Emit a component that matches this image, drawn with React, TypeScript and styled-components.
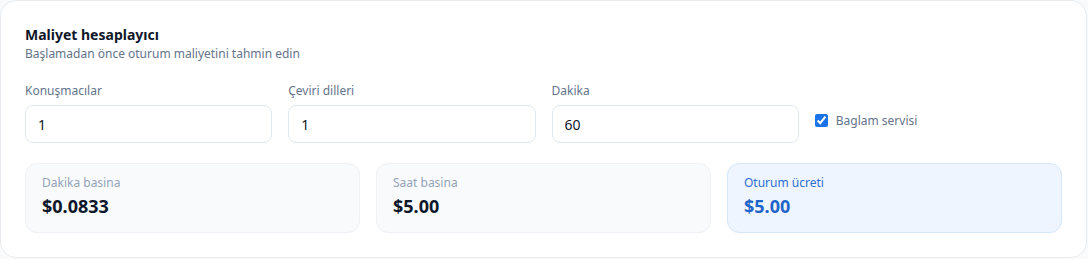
import React from "react";
import styled, { createGlobalStyle } from "styled-components";

const Global = createGlobalStyle`
  html, body { margin: 0; padding: 0; background: #f8fafc; }
  body { font-family: "Noto Sans", "Open Sans", sans-serif; color: #0f172a; }
  * { box-sizing: border-box; }
`;

const Card = styled.section`
  width: 1087px;
  height: 258px;
  background: #ffffff;
  border: 1px solid #e8ebf0;
  border-radius: 16px;
  padding: 24px 24px 24px;
  display: flex;
  flex-direction: column;
`;

const Title = styled.h2`
  margin: 0;
  font-size: 14px;
  line-height: 20px;
  font-weight: 700;
  color: #0f172a;
`;

const Subtitle = styled.p`
  margin: 1px 0 0;
  font-size: 12px;
  line-height: 16px;
  color: #64748b;
`;

const Fields = styled.div`
  margin-top: 21px;
  display: grid;
  grid-template-columns: repeat(4, 1fr);
  gap: 16px;
  align-items: end;
`;

const Field = styled.label`
  display: flex;
  flex-direction: column;
  gap: 6px;
`;

const Label = styled.span`
  font-size: 12px;
  line-height: 16px;
  color: #64748b;
`;

const Input = styled.input`
  height: 38px;
  border: 1px solid #e2e8f0;
  border-radius: 8px;
  padding: 0 12px;
  font-family: inherit;
  font-size: 14px;
  color: #0f172a;
  background: #fff;
  outline: none;
`;

const CheckRow = styled.label`
  display: flex;
  align-items: center;
  gap: 8px;
  height: 38px;
  padding-bottom: 8px;
  font-size: 12px;
  color: #64748b;
`;

const Check = styled.input`
  margin: 0;
  width: 13px;
  height: 13px;
  accent-color: #1a73e8;
`;

const Stats = styled.div`
  margin-top: 20px;
  display: grid;
  grid-template-columns: repeat(3, 1fr);
  gap: 16px;
`;

const Stat = styled.div<{ $accent?: boolean }>`
  height: 70px;
  border-radius: 12px;
  border: 1px solid ${(p) => (p.$accent ? "#d6e6fd" : "#eef1f5")};
  background: ${(p) => (p.$accent ? "#eef5ff" : "#f8fafc")};
  padding: 11px 16px;
  display: flex;
  flex-direction: column;
  gap: 3px;
`;

const StatLabel = styled.span<{ $accent?: boolean }>`
  font-size: 12px;
  line-height: 16px;
  color: ${(p) => (p.$accent ? "#2f6fd0" : "#94a3b8")};
`;

const StatValue = styled.span<{ $accent?: boolean }>`
  font-size: 18px;
  line-height: 24px;
  font-weight: 700;
  color: ${(p) => (p.$accent ? "#1f64c8" : "#0f172a")};
`;

export default function App() {
  return (
    <>
      <Global />
      <Card>
        <Title>Maliyet hesaplayıcı</Title>
        <Subtitle>Başlamadan önce oturum maliyetini tahmin edin</Subtitle>
        <Fields>
          <Field>
            <Label>Konuşmacılar</Label>
            <Input defaultValue="1" />
          </Field>
          <Field>
            <Label>Çeviri dilleri</Label>
            <Input defaultValue="1" />
          </Field>
          <Field>
            <Label>Dakika</Label>
            <Input defaultValue="60" />
          </Field>
          <CheckRow>
            <Check type="checkbox" defaultChecked />
            Baglam servisi
          </CheckRow>
        </Fields>
        <Stats>
          <Stat>
            <StatLabel>Dakika basina</StatLabel>
            <StatValue>$0.0833</StatValue>
          </Stat>
          <Stat>
            <StatLabel>Saat basina</StatLabel>
            <StatValue>$5.00</StatValue>
          </Stat>
          <Stat $accent>
            <StatLabel $accent>Oturum ücreti</StatLabel>
            <StatValue $accent>$5.00</StatValue>
          </Stat>
        </Stats>
      </Card>
    </>
  );
}
